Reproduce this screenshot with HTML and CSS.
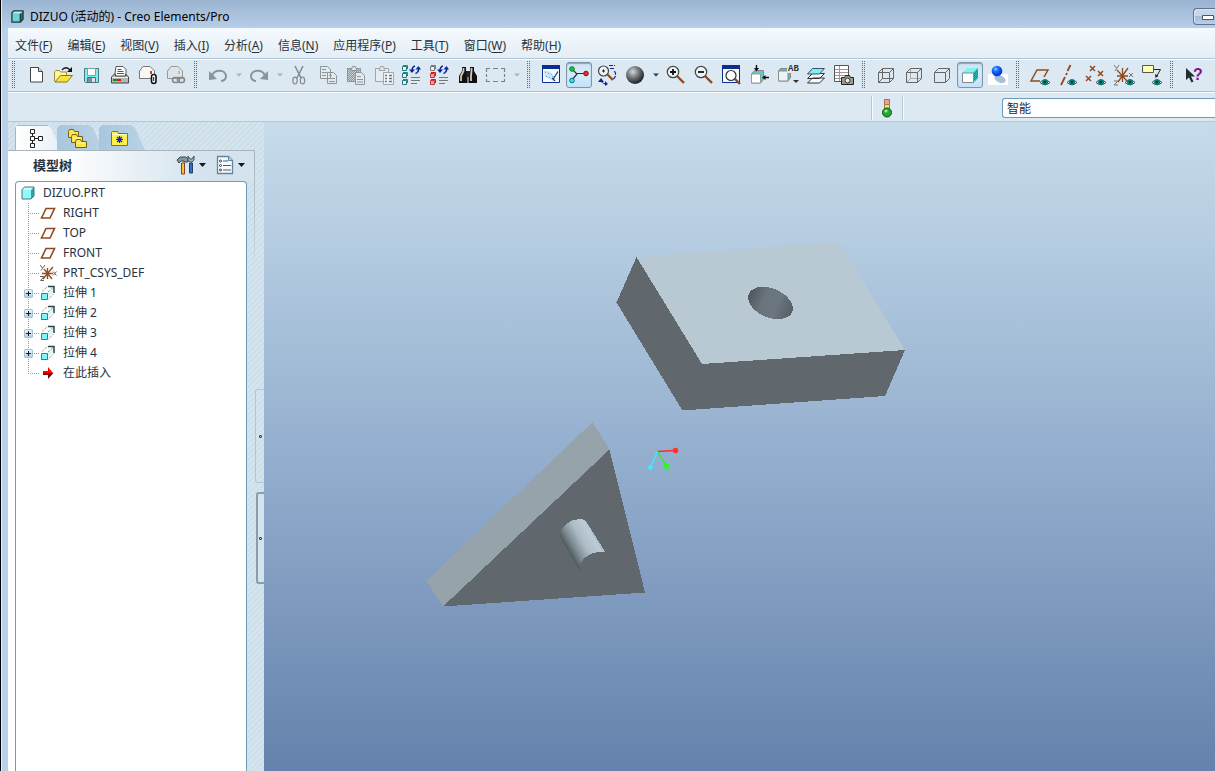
FILE: index.html
```html
<!DOCTYPE html>
<html lang="zh-CN">
<head>
<meta charset="utf-8">
<title>DIZUO (活动的) - Creo Elements/Pro</title>
<link rel="stylesheet" href="styles.css">
</head>
<body>
<svg class="defs" aria-hidden="true">
  <defs>
    <linearGradient id="g-cyl" gradientUnits="userSpaceOnUse" x1="302" y1="426" x2="335" y2="407">
      <stop offset="0" stop-color="#4d565c"/><stop offset=".2" stop-color="#7d8a92"/><stop offset=".45" stop-color="#acbac4"/><stop offset=".75" stop-color="#bccdd8"/><stop offset="1" stop-color="#8b99a3"/>
    </linearGradient>
    <linearGradient id="g-hole" x1="0" y1="0" x2="1" y2="0">
      <stop offset="0" stop-color="#50575d"/><stop offset=".35" stop-color="#6a747c"/><stop offset=".65" stop-color="#6c7680"/><stop offset="1" stop-color="#565e65"/>
    </linearGradient>
    <radialGradient id="g-ball" cx=".38" cy=".32" r=".65"><stop offset="0" stop-color="#d8d8d8"/><stop offset=".4" stop-color="#858b8e"/><stop offset="1" stop-color="#22282b"/></radialGradient>
    <radialGradient id="g-blue" cx=".38" cy=".32" r=".65"><stop offset="0" stop-color="#9fd0ff"/><stop offset=".35" stop-color="#1a70ff"/><stop offset="1" stop-color="#0038d0"/></radialGradient>
    <pattern id="p-mesh" width="2" height="2" patternUnits="userSpaceOnUse"><rect width="2" height="2" fill="#34b8b8"/><path d="M0 0h1v1H0zM1 1h1v1H1z" fill="#4a7474"/></pattern>
    <pattern id="p-grey" width="2" height="2" patternUnits="userSpaceOnUse"><rect width="2" height="2" fill="#c9d0d4"/><path d="M0 0h1v1H0zM1 1h1v1H1z" fill="#8e9599"/></pattern>
  </defs>
  <symbol id="eye" viewBox="0 0 12 8"><path d="M1 4.500Q6-1 11 4.500Q6 9 1 4.500z" fill="#e8eeee" stroke="#4d5557"/><circle cx="6" cy="4.200" r="3" fill="#007c78"/><circle cx="6" cy="4" r="1.100" fill="#05282b"/></symbol>
  <symbol id="plane" viewBox="0 0 18 18"><path d="M2.500 14L7 4.500h8.500L11 14z" fill="none" stroke="#8d4a20" stroke-width="1.600"/></symbol>
  <symbol id="csys" viewBox="0 0 18 18"><path d="M3 9.500h11M8.500 4v11M5 5l8 10M14 3L4 15" stroke="#95501f" stroke-width="1.400"/><path d="M1 1l2.500 3M6 1L2 6.500M1 12.500h4L1.500 16.500H5M14 7.500l3.500 4M17.500 7.500l-3.500 4" stroke="#666" fill="none"/></symbol>
  <symbol id="extrude" viewBox="0 0 18 18"><path d="M8.500 8l6-5v5l-5 5z" fill="#dff6f7"/><path d="M3 7.500L8.500 2.500M9 15.500l6-6M9 8l5.500-5" stroke="#777" stroke-dasharray="1 1"/><path d="M9 2.500h6V9" fill="none" stroke="#26474a" stroke-width="1.500"/><path d="M2.500 9.500h6v6h-6z" fill="#7ff7fb" stroke="#4b7780"/></symbol>
  <symbol id="part" viewBox="0 0 14 14"><path d="M1 4l3-3h9v9l-3 3H1z" fill="#2fa5a8"/><path d="M1 4h9v9H1z" fill="#8ffafb"/><path d="M1 4l3-3h9l-3 3z" fill="#c6ffff"/><path d="M1 3.500L3.500 1H13v9l-3 3H1z" fill="none" stroke="#4a7478"/></symbol>
  <symbol id="lens" viewBox="0 0 24 24"><path d="M13 13l7 7" stroke="#8a4a22" stroke-width="2.400"/><circle cx="9" cy="9" r="5.700" fill="#eef4f6" stroke="#444" stroke-width="1.200"/></symbol>
  <symbol id="cycle" viewBox="0 0 12 12"><path d="M3 7c0-3 1-4.500 3-5M9.500 4c.5 3-.5 4.500-3 5.500" stroke="#0a2a9c" stroke-width="1.600" fill="none"/><path d="M0 5.500h6L3 9zM6.500 5.500L9.500 2l2.500 3.500z" fill="#0a2a9c"/></symbol>
  <symbol id="down" viewBox="0 0 7 4"><path d="M0 0h7L3.500 4z" fill="currentColor"/></symbol>
</svg>

<div class="window">
  <header class="titlebar">
    <svg class="app-icon" viewBox="0 0 14 14"><path d="M1 4l3-3h9v9l-3 3H1z" fill="#3a6f72"/><path d="M1 4h9v9H1z" fill="#68d4d6"/><path d="M1 4l3-3h9l-3 3z" fill="#b9eeee"/><path d="M1 3v10h9l3-3V1H3zM10 4v9" fill="none" stroke="#1e3437" stroke-width="1.300"/></svg>
    <h1 class="title">DIZUO (活动的) - Creo Elements/Pro</h1>
    <button class="minimize" aria-label="最小化"><svg viewBox="0 0 12 5"><path d="M.5.500h11v4H.5z" fill="#fff" stroke="#4a5663"/></svg></button>
  </header>

  <div class="client">
    <nav class="menubar" aria-label="菜单">
      <button>文件(<u>F</u>)</button><button>编辑(<u>E</u>)</button><button>视图(<u>V</u>)</button><button>插入(<u>I</u>)</button><button>分析(<u>A</u>)</button><button>信息(<u>N</u>)</button><button>应用程序(<u>P</u>)</button><button>工具(<u>T</u>)</button><button>窗口(<u>W</u>)</button><button>帮助(<u>H</u>)</button>
    </nav>

    <div class="toolbar" role="toolbar" aria-label="工具栏">
      <span class="grip"></span>
      <button class="tool" aria-label="新建"><svg viewBox="0 0 24 24"><path d="M6.500 4.500h8l4 4v10.500h-12z" fill="#fff" stroke="#444"/><path d="M14.500 4.500v4h4" fill="#ddd" stroke="#444"/></svg></button>
      <button class="tool" aria-label="打开"><svg viewBox="0 0 24 24"><path d="M2.500 18.500v-10l1-1h4l1 1.500h6v4" fill="#fff6a0" stroke="#a08c38"/><path d="M3 19l5.500-6.500H20.500L15 19z" fill="#f6e53c" stroke="#8c7620"/><path d="M10 7c2-3 6-3 8 0" fill="none" stroke="#111" stroke-width="1.300"/><path d="M20 4v5h-5z" fill="#111"/></svg></button>
      <button class="tool" aria-label="保存"><svg viewBox="0 0 24 24"><path d="M4.500 5.500h14v14h-13l-1-1z" fill="#6ff3f8" stroke="#53757c"/><path d="M7.500 5.500h8v7h-8z" fill="#fff" stroke="#7aa3a9"/><path d="M7.500 14.500h8v5h-8z" fill="#808c91" stroke="#5c6d73"/><path d="M12 15h3v4h-3z" fill="#d8e0e2"/></svg></button>
      <button class="tool" aria-label="打印"><svg viewBox="0 0 24 24"><path d="M8 3.500h7l3 3V14H6.500z" fill="#fff" stroke="#555"/><path d="M9.500 6.500h4M9.500 8.500h6M9 10.500h7" stroke="#555"/><path d="M3.500 14l3-3h1v2h10v-2l3 3v6H3.500z" fill="#b4b5ae" stroke="#444"/><path d="M4 14.500h16" stroke="#eee"/><path d="M5 16h5v2H5z" fill="#128c20"/><path d="M10 16h3v2h-3z" fill="#d11"/></svg></button>
      <button class="tool" aria-label="发送"><svg viewBox="0 0 24 24"><path d="M3.500 15.500V8L7 3.500h7L18.500 8v7.500z" fill="#f8f8f5" stroke="#777"/><path d="M14 8h2v3h-2z" fill="#d33"/><rect x="15.500" y="11.500" width="4.500" height="9" rx="2.200" fill="#fff" stroke="#111" stroke-width="1.600"/><path d="M17.700 14v4" stroke="#111"/></svg></button>
      <button class="tool" aria-label="链接"><svg viewBox="0 0 24 24"><path d="M3.500 15.500V8L7 3.500h7L18.500 8v7.500z" fill="#dfe4e7" stroke="#999"/><path d="M14 8h2v3h-2z" fill="#bbb"/><rect x="8.500" y="14.500" width="7" height="5" rx="2.500" fill="none" stroke="#888" stroke-width="1.600"/><rect x="13.500" y="14.500" width="7" height="5" rx="2.500" fill="none" stroke="#888" stroke-width="1.600"/></svg></button>
      <span class="grip"></span>
      <button class="tool" aria-label="撤消" disabled><svg viewBox="0 0 24 24"><path d="M6 13c2-7 14-7 14 .5 0 3-3 4.500-5 4.500" fill="none" stroke="#8a949b" stroke-width="2"/><path d="M3 8v9l8-1z" fill="#8a949b"/></svg></button>
      <button class="drop off" aria-label="撤消列表" disabled><svg viewBox="0 0 7 4"><use href="#down"/></svg></button>
      <button class="tool" aria-label="重做" disabled><svg viewBox="0 0 24 24"><path d="M18 13c-2-7-14-7-14 .5 0 3 3 4.500 5 4.500" fill="none" stroke="#8a949b" stroke-width="2"/><path d="M21 8v9l-8-1z" fill="#8a949b"/></svg></button>
      <button class="drop off" aria-label="重做列表" disabled><svg viewBox="0 0 7 4"><use href="#down"/></svg></button>
      <button class="tool" aria-label="剪切" disabled><svg viewBox="0 0 24 24"><path d="M7 3l6 12M15 3L9 15" stroke="#858d92" stroke-width="1.600"/><ellipse cx="7" cy="17.500" rx="2.200" ry="3.300" fill="none" stroke="#858d92" stroke-width="1.200"/><ellipse cx="14.500" cy="17.500" rx="2.200" ry="3.300" fill="none" stroke="#858d92" stroke-width="1.200"/></svg></button>
      <button class="tool" aria-label="复制" disabled><svg viewBox="0 0 24 24"><path d="M4.500 3.500h7l3 3v9h-10zM11.500 9.500h6l3 3v8h-9z" fill="#e3eaee" stroke="#8d959a"/><path d="M6 6.500h4M6 9.500h5M6 12.500h4M13 12.500h3M13 15.500h6M13 18.500h6" stroke="#8d959a"/></svg></button>
      <button class="tool" aria-label="粘贴" disabled><svg viewBox="0 0 24 24"><path d="M3.500 5.500h13v13h-13z" fill="url(#p-grey)" stroke="#8d959a"/><path d="M7 7.500l1.500-4h3l1.500 4z" fill="#dde4e8" stroke="#8d959a"/><path d="M11.500 9.500h6l3 3v9h-9z" fill="#e3eaee" stroke="#8d959a"/><path d="M13 13.500h4M13 16.500h6M13 19h6" stroke="#8d959a"/></svg></button>
      <button class="tool" aria-label="选择性粘贴" disabled><svg viewBox="0 0 24 24"><path d="M3.500 5.500h13v13h-13z" fill="#e6ecef" stroke="#a0a8ac"/><path d="M7 7.500l1.500-4h3l1.500 4z" fill="#dde4e8" stroke="#a0a8ac"/><path d="M11.500 9.500h10v12h-10z" fill="#f0f3f5" stroke="#a0a8ac"/><path d="M13 12.500h2m2 0h3M13 15.500h2m2 0h3M13 18.500h2m2 0h3" stroke="#70797e" stroke-width="1.300"/></svg></button>
      <button class="tool" aria-label="再生"><svg viewBox="0 0 24 24"><path d="M2.500 3.500h4v4h-4zM2.500 10.500h4v4h-4zM2.500 17.500h4v4h-4z" fill="#dff" stroke="#267a7c"/><path d="M3 2.500h4.500V6M3 9.500h4.500V13M3 16.500h4.500V20" fill="none" stroke="#16898b"/><use href="#cycle" x="8" y="1" width="14" height="12"/><path d="M11 14.500h9M11 17.500h9M11 20.500h6" stroke="#777"/></svg></button>
      <button class="tool" aria-label="再生管理器"><svg viewBox="0 0 24 24"><path d="M2.500 3.500h4v4h-4z" fill="#eee" stroke="#777"/><path d="M2.500 10.500h4v4h-4zM2.500 17.500h4v4h-4z" fill="#ff9a9a" stroke="#c33"/><path d="M3 2.500h4.500V6" fill="none" stroke="#777"/><path d="M3 9.500h4.500V13M3 16.500h4.500V20" fill="none" stroke="#d11"/><use href="#cycle" x="8" y="1" width="14" height="12"/><path d="M11 14.500h9M11 17.500h9M11 20.500h6" stroke="#777"/></svg></button>
      <button class="tool" aria-label="查找"><svg viewBox="0 0 24 24"><path d="M6 4h4v4l1.500 2v10H3v-7l3-5zM14 4h4v4l3 5v7h-8.500V10L14 8z" fill="#111"/><path d="M10 8h4v6h-4z" fill="#222"/><path d="M7.500 5v3L5 13v5M15.500 5v3l-.5 5v5" stroke="#d0cdbb" stroke-width="1.800" fill="none"/></svg></button>
      <button class="tool" aria-label="选择框"><svg viewBox="0 0 24 24"><path d="M2.500 9V5.500H6M9 5.500h5M17 5.500h3.500V9M20.500 11v3M20.500 16v2.500H17M14 18.500H9M6 18.500H2.500V16M2.500 14v-3" fill="none" stroke="#7b8387" stroke-width="1.200"/></svg></button>
      <button class="drop off" aria-label="选择列表" disabled><svg viewBox="0 0 7 4"><use href="#down"/></svg></button>
      <span class="grip"></span>
      <button class="tool" aria-label="重画"><svg viewBox="0 0 24 24"><path d="M3.500 3h17v16.500h-17z" fill="#f4fbff" stroke="#0a2f90"/><path d="M3 2h18v4H3z" fill="#0a2f90"/><path d="M5 8h6l6 8-3 2-8-4z" fill="#cdeafc"/><path d="M6 9l6 2 3 4M7 13l5 2" stroke="#3a78c8" stroke-dasharray="1 2" fill="none"/><path d="M19 8.500l-5 8M13 15l3 3" stroke="#24407c" fill="none" stroke-width="1.300"/></svg></button>
      <button class="tool on" aria-label="旋转中心" aria-pressed="true"><svg viewBox="0 0 24 24"><path d="M5 6l5 5-5 6M10 10.500h8" stroke="#234" fill="none" stroke-width="1.200"/><circle cx="5" cy="6" r="2.300" fill="#1ccd2a" stroke="#073"/><circle cx="19" cy="10.500" r="2.300" fill="#f22" stroke="#811"/><circle cx="5" cy="17.500" r="2.300" fill="#33e6ee" stroke="#077"/></svg></button>
      <button class="tool" aria-label="定向模式"><svg viewBox="0 0 24 24"><circle cx="8.500" cy="8" r="5" fill="#eef4f6" stroke="#444" stroke-width="1.200"/><path d="M12 11l6 6" stroke="#8a4a22" stroke-width="2.200"/><path d="M7 8h3M8.500 6.500v3" stroke="#222"/><path d="M14 2.500h6M15 5.500h4M19.500 8c2 3 1 6-1 8M6 16c0 3 2 5 5 5" stroke="#10219c" fill="none" stroke-dasharray="4 1" stroke-width="1.200"/><path d="M3 19l3-4 3 4zM10 18v5l3-2z" fill="#10219c"/></svg></button>
      <button class="tool" aria-label="外观库"><svg viewBox="0 0 24 24"><circle cx="12" cy="12" r="9" fill="url(#g-ball)"/></svg></button>
      <button class="drop" aria-label="外观列表"><svg viewBox="0 0 7 4"><use href="#down"/></svg></button>
      <button class="tool" aria-label="放大"><svg viewBox="0 0 24 24"><use href="#lens" width="24" height="24"/><path d="M6 9h6M9 6v6" stroke="#111" stroke-width="1.800"/></svg></button>
      <button class="tool" aria-label="缩小"><svg viewBox="0 0 24 24"><use href="#lens" width="24" height="24"/><path d="M6 9h6" stroke="#111" stroke-width="1.800"/></svg></button>
      <button class="tool" aria-label="重新调整"><svg viewBox="0 0 24 24"><path d="M2.500 3h17v16.500h-17z" fill="#f4fbff" stroke="#0a2f90"/><path d="M2 2h18v4H2z" fill="#0a2f90"/><path d="M15 16l5 5" stroke="#8a4a22" stroke-width="2.400"/><circle cx="11" cy="12.500" r="5" fill="#fff" stroke="#333" stroke-width="1.200"/></svg></button>
      <button class="tool" aria-label="重定向"><svg viewBox="0 0 24 24"><path d="M3.500 11l3-3.500h9v9l-3 3.500h-9z" fill="#5fc9cd" stroke="#888"/><path d="M3.500 11h9v9h-9z" fill="#fff" stroke="#999"/><path d="M8.500 2v4M21 14.500h-4" stroke="#111" stroke-width="1.400"/><path d="M6 5h5L8.500 8.500zM17.500 12v5L14 14.500z" fill="#111"/></svg></button>
      <button class="tool" aria-label="已命名视图"><svg viewBox="0 0 24 24"><path d="M2.500 8l2-2.500h10v9L12 18H2.500z" fill="#52bfc2" stroke="#888"/><path d="M2.500 8h9.500v10h-9.500z" fill="#edf2f4" stroke="#8a8f92"/><path d="M11 1h13v9H11z" fill="#dde9f2"/><text x="12" y="8" class="glyph-ab">AB</text><path d="M17 17h6l-3 3z" fill="#333"/></svg></button>
      <button class="tool" aria-label="层"><svg viewBox="0 0 24 24"><path d="M3.500 20l5-5h12l-5 5zM3.500 15.500l5-5h12l-5 5z" fill="#f7fbfc" stroke="#333"/><path d="M3.500 11l5-5.500h12L15.500 11z" fill="#7eeff2" stroke="#356"/></svg></button>
      <button class="tool" aria-label="视图管理器"><svg viewBox="0 0 24 24"><path d="M2.500 2.500h14v16h-14z" fill="#fff" stroke="#555"/><path d="M3 6.500h13M3 9.500h13M3 12.500h13M3 15.500h13M7.500 3v15" stroke="#999"/><path d="M9.500 14.500h3l1-2h4l1 2h3v7h-12z" fill="#9b9c90" stroke="#222"/><circle cx="15.500" cy="17.500" r="2.500" fill="#e9e9e4" stroke="#333"/></svg></button>
      <span class="grip"></span>
      <button class="tool" aria-label="线框"><svg viewBox="0 0 24 24"><path d="M4.500 9.500h11v10h-11zM8.500 5.500h11v10h-11zM4.500 9.500l4-4M15.500 9.500l4-4M4.500 19.500l4-4M15.500 19.500l4-4" fill="none" stroke="#666"/></svg></button>
      <button class="tool" aria-label="隐藏线"><svg viewBox="0 0 24 24"><path d="M8.500 5.500v10h11M4.500 19.500l4-4" fill="none" stroke="#aaa"/><path d="M4.500 9.500h11v10h-11zM4.500 9.500l4-4h11v10l-4 4M15.500 9.500l4-4" fill="none" stroke="#666"/></svg></button>
      <button class="tool" aria-label="消隐"><svg viewBox="0 0 24 24"><path d="M4.500 9.500h11v10h-11zM4.500 9.500l4-4h11v10l-4 4M15.500 9.500l4-4" fill="none" stroke="#666"/></svg></button>
      <button class="tool on" aria-label="着色" aria-pressed="true"><svg viewBox="0 0 24 24"><path d="M4 10l5-5h11l-5 5z" fill="#7df3f5"/><path d="M15 10l5-5v10l-5 5z" fill="url(#p-mesh)"/><path d="M4.500 10h11v9.500h-11z" fill="#fff" stroke="#888"/></svg></button>
      <button class="tool" aria-label="增强的真实感"><svg viewBox="0 0 24 24"><path d="M2 11h20v11H2z" fill="#fff"/><ellipse cx="14" cy="16" rx="6" ry="3.500" transform="rotate(25 14 16)" fill="#a6bfda"/><circle cx="11" cy="8" r="5.300" fill="url(#g-blue)"/></svg></button>
      <span class="grip"></span>
      <button class="tool" aria-label="平面显示"><svg viewBox="0 0 24 24"><path d="M12 18H3L9 7h11l-4 7" fill="none" stroke="#8f4b20" stroke-width="1.500"/><use href="#eye" x="11" y="15" width="12" height="8"/></svg></button>
      <button class="tool" aria-label="轴显示"><svg viewBox="0 0 24 24"><path d="M14.500 2l-3 6M11 10l-1 2M9 14l-4 8" stroke="#8f4b20" stroke-width="1.800"/><use href="#eye" x="10" y="15" width="12" height="8"/></svg></button>
      <button class="tool" aria-label="点显示"><svg viewBox="0 0 24 24"><path d="M6 3l5 5M11 3L6 8M2 13l5 5M7 13l-5 5M14 8l5 5M19 8l-5 5" stroke="#8f4b20" stroke-width="1.500"/><use href="#eye" x="11" y="15" width="12" height="8"/></svg></button>
      <button class="tool" aria-label="坐标系显示"><svg viewBox="0 0 24 24"><path d="M5 13h11M10.500 5v14M5 7l10 11M16 5L6 19" stroke="#8f4b20" stroke-width="1.300"/><path d="M2 2l2.500 3M7 2L3 8M2 18h4l-4 4h4M17 10l4 4M21 10l-4 4" stroke="#777" fill="none"/><use href="#eye" x="12" y="15" width="12" height="8"/></svg></button>
      <button class="tool" aria-label="注释显示"><svg viewBox="0 0 24 24"><path d="M2.500 2.500h11v7h-11z" fill="#ffffb0" stroke="#555"/><path d="M14 6.500h6.500l-4 7" fill="none" stroke="#222"/><path d="M15 11l.5 4 3-2z" fill="#222"/><use href="#eye" x="11" y="15" width="12" height="8"/></svg></button>
      <span class="grip"></span>
      <button class="tool" aria-label="这是什么"><svg viewBox="0 0 24 24"><path d="M4 5v12l3-2.500 2.500 5 2-1-2.500-5h4z" fill="#222d36"/><text x="11" y="17" class="glyph-help">?</text></svg></button>
    </div>

    <div class="dashboard">
      <div class="message"></div>
      <div class="status"><svg viewBox="0 0 12 22"><path d="M3.500 2.500h5v5h-5z" fill="#efa0a0" stroke="#b56060"/><path d="M3.500 7.500h5v4h-5z" fill="#f5e850" stroke="#8d8634"/><circle cx="6" cy="15.500" r="4.500" fill="#23a92d" stroke="#174e1b"/><circle cx="5" cy="14" r="1.500" fill="#a6eba5"/></svg></div>
      <select class="filter" aria-label="选择过滤器"><option>智能</option></select>
    </div>

    <main class="work">
      <aside class="navigator">
        <div class="nav-body">
          <div class="tabs" role="tablist">
            <button class="tab tab-on" role="tab" aria-label="模型树" aria-selected="true"><svg viewBox="0 0 20 20"><path d="M4.500 1.500h4v4h-4zM4.500 8.500h4v4h-4zM12.500 8.500h4v4h-4zM4.500 15.500h4v4h-4z" fill="#fff" stroke="#222"/><path d="M6.500 6v2M6.500 13v2M9 10.500h3" stroke="#222"/></svg></button>
            <button class="tab" role="tab" aria-label="文件夹浏览器"><svg viewBox="0 0 20 20"><g fill="#ffe44b" stroke="#75611a"><path d="M1.500 3.500l1-2h4l1 2h4v6h-10z"/><path d="M4.500 8.500l1-2h4l1 2h5v6h-11z"/><path d="M8.500 13.500l1-2h4l1 2h5v6h-11z"/></g><path d="M10 15h8M6 10h7" stroke="#fff9b8"/></svg></button>
            <button class="tab" role="tab" aria-label="收藏夹"><svg viewBox="0 0 20 20"><path d="M2.500 17.500v-13l1-1h5l1 2h9v12z" fill="#fff04b" stroke="#857020"/><path d="M3 6.500h15" stroke="#fffbc8"/><path d="M10.500 8v7M7 11.500h7M8 9l5 5M13 9l-5 5" stroke="#1028a0" stroke-width="1.200"/></svg></button>
          </div>
          <section class="panel">
            <div class="panel-head">
              <h2 class="panel-title">模型树</h2>
              <button class="panel-tool" aria-label="设置"><svg class="i20" viewBox="0 0 20 20"><path d="M1 5l3-3h6l2 2v3H8V6H5L3 8z" fill="#7f9a9c" stroke="#3c4a4c"/><path d="M5.500 8h3v11h-3z" fill="#e9c83a" stroke="#98391c"/><path d="M12 1v4l2 2h2l2-2V1l-2 3h-2z" fill="#a7b3ba" stroke="#46525a"/><path d="M13.500 8h3v10h-3z" fill="#2b6ec2" stroke="#203e6a"/></svg><svg class="arrow" viewBox="0 0 7 4"><use href="#down"/></svg></button>
              <button class="panel-tool" aria-label="显示"><svg class="i20" viewBox="0 0 20 20"><path d="M2.500 1.500h11l4 4v13h-15z" fill="#f6fafd" stroke="#5f86a5" stroke-width="1.300"/><path d="M13.500 1.500v4h4" fill="#b5d2ea" stroke="#5f86a5"/><path d="M8 6h5M8 10.500h8M8 15h8" stroke="#557"/><g fill="none" stroke="#345"><circle cx="5.500" cy="6" r="1"/><circle cx="5.500" cy="10.500" r="1"/><circle cx="5.500" cy="15" r="1"/></g></svg><svg class="arrow" viewBox="0 0 7 4"><use href="#down"/></svg></button>
            </div>
            <div class="tree-wrap">
              <div class="tree">
                <div class="row root"><svg class="i14" viewBox="0 0 14 14"><use href="#part"/></svg><span>DIZUO.PRT</span></div>
                <ul class="children">
                  <li class="row"><span class="guide"></span><svg class="i18" viewBox="0 0 18 18"><use href="#plane"/></svg><span>RIGHT</span></li>
                  <li class="row"><span class="guide"></span><svg class="i18" viewBox="0 0 18 18"><use href="#plane"/></svg><span>TOP</span></li>
                  <li class="row"><span class="guide"></span><svg class="i18" viewBox="0 0 18 18"><use href="#plane"/></svg><span>FRONT</span></li>
                  <li class="row"><span class="guide"></span><svg class="i18" viewBox="0 0 18 18"><use href="#csys"/></svg><span>PRT_CSYS_DEF</span></li>
                  <li class="row"><span class="guide"><button class="toggle" aria-label="展开 拉伸 1"><svg viewBox="0 0 9 9"><path d="M2 4.500h5M4.500 2v5" stroke="#14202c"/></svg></button></span><svg class="i18" viewBox="0 0 18 18"><use href="#extrude"/></svg><span>拉伸 1</span></li>
                  <li class="row"><span class="guide"><button class="toggle" aria-label="展开 拉伸 2"><svg viewBox="0 0 9 9"><path d="M2 4.500h5M4.500 2v5" stroke="#14202c"/></svg></button></span><svg class="i18" viewBox="0 0 18 18"><use href="#extrude"/></svg><span>拉伸 2</span></li>
                  <li class="row"><span class="guide"><button class="toggle" aria-label="展开 拉伸 3"><svg viewBox="0 0 9 9"><path d="M2 4.500h5M4.500 2v5" stroke="#14202c"/></svg></button></span><svg class="i18" viewBox="0 0 18 18"><use href="#extrude"/></svg><span>拉伸 3</span></li>
                  <li class="row"><span class="guide"><button class="toggle" aria-label="展开 拉伸 4"><svg viewBox="0 0 9 9"><path d="M2 4.500h5M4.500 2v5" stroke="#14202c"/></svg></button></span><svg class="i18" viewBox="0 0 18 18"><use href="#extrude"/></svg><span>拉伸 4</span></li>
                  <li class="row"><span class="guide last"></span><svg class="i18" viewBox="0 0 18 18"><path d="M4 7h5V3l5 6H4z" fill="#f00"/><path d="M4 9h10.500L9 15v-4H4z" fill="#7d0808"/></svg><span>在此插入</span></li>
                </ul>
              </div>
            </div>
          </section>
        </div>
        <div class="rail">
          <button class="rail-tab" aria-label="折叠导航器"><i></i></button>
          <button class="rail-tab rail-on" aria-label="展开浏览器"><i></i></button>
        </div>
      </aside>

      <div class="viewport">
        <svg class="model" viewBox="0 0 951 649" preserveAspectRatio="xMinYMin meet" role="img" aria-label="DIZUO">
          <g shape-rendering="crispEdges">
            <path d="M372.500 135L352.500 180.500 418.500 288.500 438 242z" fill="#60676d"/>
            <path d="M438 242L641 228 621 274 418.500 288.500z" fill="#60676d"/>
            <path d="M372.500 135L575.500 120.500 641 228 438 242z" fill="#b8c9d3"/>
            <ellipse cx="506.500" cy="181" rx="23.500" ry="14.500" transform="rotate(23 506.500 181)" fill="url(#g-hole)"/>
            <path d="M328.500 300L345.500 327.500 179 484.500 162.500 458.500z" fill="#97a3ab"/>
            <path d="M345.500 327.500L381 470.500 179 484.500z" fill="#60676d"/>
            <path d="M315.500 448.500L295.500 413.500C297 404 306 397 316 397Q320 397 322.500 400L341.500 430.500C332 428 315 434 315.500 448.500z" fill="url(#g-cyl)"/>
          </g>
          <path d="M393.500 329.500L411 328.500" stroke="#ff2a2a" stroke-width="1.300"/>
          <path d="M393.500 329.500L402.500 344.500" stroke="#28f028" stroke-width="1.300"/>
          <path d="M393.500 329.500L386.500 345" stroke="#2ff4ff" stroke-width="1.300"/>
          <circle cx="411.500" cy="328.500" r="2.700" fill="#ff3030"/><circle cx="402.500" cy="344.500" r="3" fill="#30f530"/><circle cx="386.500" cy="345.500" r="2.400" fill="#2ff4ff"/>
        </svg>
      </div>
    </main>
  </div>
</div>
</body>
</html>
```
FILE: styles.css
```css
* { box-sizing: border-box; }
body {
  margin: 0;
  font: 12px/20px "Noto Sans", "Noto Sans CJK SC", sans-serif;
  color: #263240;
}
button {
  font: inherit;
  color: inherit;
  background: none;
  border: 0;
  padding: 0;
}
svg { display: block; flex: none; }
.defs { width: 0; height: 0; position: absolute; }

.window {
  min-height: 100vh;
  display: flex;
  flex-direction: column;
  background: #b9d0ea;
  border-left: 1px solid #000;
  box-shadow: inset 1px 0 #e3edf7;
}
.titlebar {
  height: 28px;
  display: flex;
  align-items: center;
  padding-left: 9px;
  padding-top: 5px;
  background: linear-gradient(#9ab3d0, #b7cee8);
  border-left: 1px solid #e3edf7;
}
.app-icon { width: 13px; height: 13px; }
.title { margin: 0 auto 0 6px; font-size: 12px; font-weight: 400; color: #000; }
.minimize {
  width: 22px;
  height: 17px;
  display: flex;
  align-items: center;
  justify-content: flex-end;
  padding: 2px 1px 0 0;
  border: 1px solid #5d7390;
  border-right: 0;
  border-radius: 4px 0 0 4px;
  background: linear-gradient(#c6d7e9 50%, #a4bbd5 50%, #b9d0e8);
  box-shadow: inset 1px 1px #dbe7f3;
}
.minimize svg { width: 12px; height: 5px; }

.client {
  flex: 1;
  display: flex;
  flex-direction: column;
  margin-left: 7px;
}
.menubar {
  height: 31px;
  display: flex;
  align-items: center;
  gap: 15px;
  padding: 6px 7px 0;
  background: linear-gradient(#f4f9fd, #e5eef5);
  border-bottom: 1px solid #afc5d5;
}
.menubar button { white-space: nowrap; }
.menubar u { text-underline-offset: 2px; }

.toolbar {
  height: 33px;
  display: flex;
  align-items: center;
  padding-bottom: 2px;
  overflow: hidden;
  background: #dce9f2;
  border-top: 1px solid #fafdff;
  border-bottom: 1px solid #a8c4d6;
}
.grip {
  flex: none;
  width: 3px;
  height: 27px;
  margin: 0 7px 0 4px;
  background: conic-gradient(from 270deg, #47718f 25%, transparent 0) 0 0 / 2px 2px;
}
.tool, .drop {
  flex: none;
  display: flex;
  align-items: center;
  justify-content: center;
}
.tool { width: 26px; height: 26px; margin: 0 1px; border-radius: 3px; }
.tool svg { width: 24px; height: 24px; }
.tool.on {
  border: 1px solid #7e95a8;
  background: linear-gradient(#cfe2f0, #d8ebf8 40%, #c3e2fa);
  box-shadow: inset 0 1px 1px #8ba3b5;
}
.drop { width: 13px; height: 26px; color: #36424c; }
.drop svg { width: 6px; height: 4px; }
.off { color: #a9b4bd; }
.glyph-ab { font: 700 9px "Liberation Mono", monospace; fill: #333; }
.glyph-help { font: 700 16px "Liberation Sans", sans-serif; fill: #87108c; }

.dashboard {
  height: 30px;
  display: flex;
  align-items: center;
  padding-top: 1px;
  background: #dce9f2;
  border-top: 1px solid #fafdff;
  border-bottom: 1px solid #b1c9da;
}
.message { flex: 1; }
.status {
  width: 32px;
  height: 24px;
  display: flex;
  align-items: center;
  justify-content: center;
  border: solid #b4c9d7;
  border-width: 0 1px;
  box-shadow: inset 1px 0 #f7fbfe, 1px 0 #f7fbfe;
}
.status svg { width: 12px; height: 22px; }
.filter {
  appearance: none;
  width: 213px;
  height: 20px;
  margin-left: 99px;
  padding: 1px 4px 0;
  font: inherit;
  line-height: 18px;
  color: #1c2733;
  background: #fff;
  border: 1px solid #6b9bb8;
  border-right: 0;
  border-radius: 3px 0 0 3px;
}

.work { flex: 1; display: flex; }
.navigator {
  flex: none;
  width: 256px;
  display: flex;
  background: repeating-linear-gradient(135deg, #cddfea 0 2px, #d5e4ed 2px 4px);
}
.nav-body { flex: 1; display: flex; flex-direction: column; padding-top: 3px; }
.tabs { display: flex; height: 25px; padding-left: 7px; }
.tab {
  width: 46px;
  margin-right: -4px;
  padding: 0 0 0 10px;
  background: linear-gradient(90deg, #a7c7de, #b9d2e3);
  clip-path: polygon(0 3px, 3px 0, 32px 0, 36px 3px, 46px 100%, 0 100%);
}
.tab-on {
  position: relative;
  background: linear-gradient(90deg, #fff, #e8f0f6);
  border-top: 1px solid #a8b6c0;
  border-left: 1px solid #a8b6c0;
}
.tab svg { width: 20px; height: 20px; }
.panel {
  flex: 1;
  display: flex;
  flex-direction: column;
  border-top: 1px solid #a9b4bc;
  border-right: 1px solid transparent;
  border-image: linear-gradient(#a9b4bc, #b9cad6 80px, transparent 120px) 1;
}
.panel-head {
  height: 30px;
  display: flex;
  align-items: center;
  padding: 0 9px 2px 25px;
  background: linear-gradient(90deg, #fff 20%, #d4e3ee 80%);
}
.panel-title { flex: 1; margin: 0; font-size: 13px; font-weight: 700; }
.panel-tool { display: flex; align-items: center; gap: 3px; margin-left: 9px; color: #101820; }
.i20 { width: 20px; height: 20px; }
.arrow { width: 7px; height: 4px; }
.tree-wrap {
  flex: 1;
  display: flex;
  padding: 0 7px;
  background: linear-gradient(#fff, #fff) 0 0 / 10px 100% no-repeat;
}
.tree {
  flex: 1;
  padding: 1px 0 0 5px;
  background: #fff;
  border: 1px solid #6e9fb9;
  border-bottom: 0;
  border-radius: 4px 4px 0 0;
}
.row { display: flex; align-items: center; height: 20px; white-space: nowrap; }
.root { gap: 8px; }
.i14 { width: 14px; height: 14px; }
.i18 { width: 18px; height: 18px; margin-right: 6px; }
.children { list-style: none; margin: 0; padding: 0 0 0 3px; }
.guide {
  flex: none;
  width: 15px;
  height: 20px;
  display: flex;
  align-items: center;
  background:
    repeating-linear-gradient(#999 0 1px, transparent 1px 2px) 4px 0 / 1px 100% no-repeat,
    repeating-linear-gradient(90deg, #999 0 1px, transparent 1px 2px) 4px 10px / 11px 1px no-repeat;
}
.last { background-size: 1px 10px, 11px 1px; }
.toggle {
  width: 9px;
  height: 9px;
  display: flex;
  border-radius: 2px;
  background: linear-gradient(#f3f9fd, #aecce2);
  box-shadow: inset 0 0 0 1px #a5c1d6;
}
.toggle svg { width: 9px; height: 9px; }
.rail { width: 9px; display: flex; flex-direction: column; gap: 9px; padding-top: 267px; }
.rail-tab {
  height: 94px;
  display: flex;
  align-items: center;
  justify-content: center;
  border: 1px solid #adc8dc;
  border-right: 0;
  border-radius: 3px 0 0 3px;
}
.rail-tab i { width: 3px; height: 3px; border: 1px solid #26384a; border-radius: 1px; }
.rail-on {
  height: 92px;
  margin-left: 1px;
  padding-right: 1px;
  border: 2px solid #8b9da9;
  border-right: 0;
  background: #d3e4f0;
}
.viewport { flex: 1; min-width: 0; background: linear-gradient(#c7dceb, #95b0cf 50%, #6582ad); }
.model { width: 100%; height: auto; }
```
